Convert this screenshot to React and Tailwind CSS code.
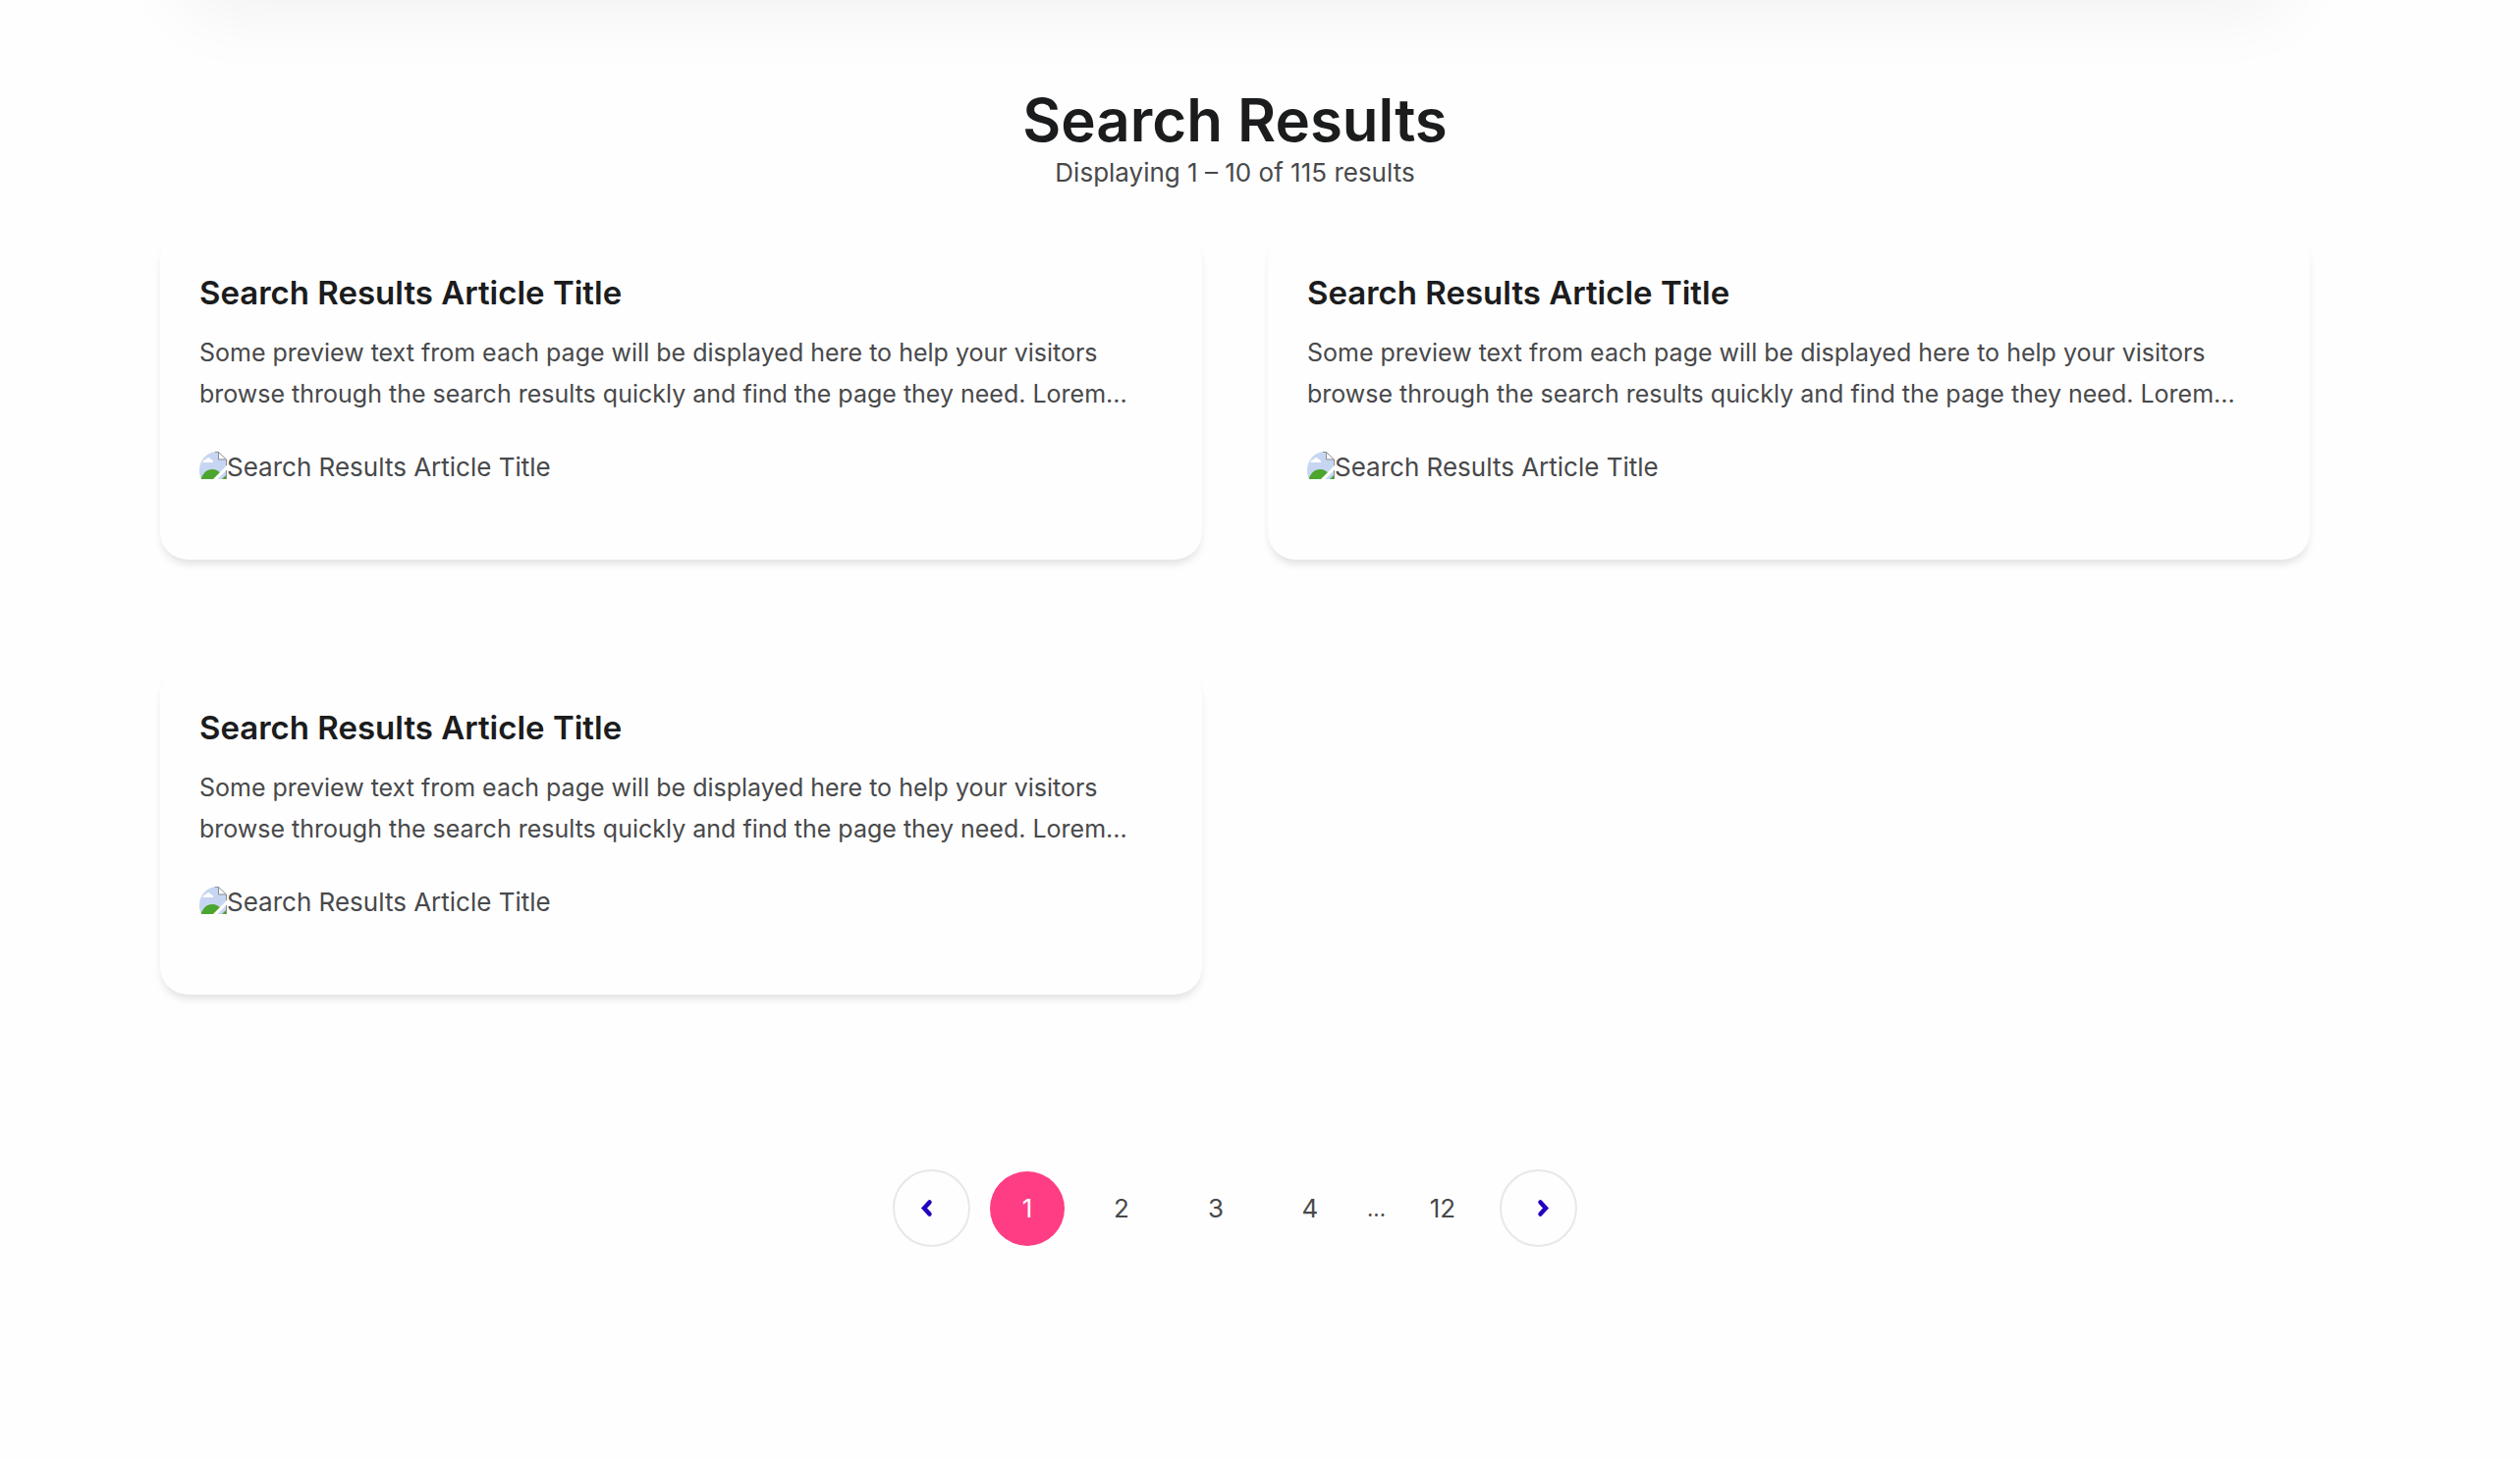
import React from 'react';

const results = [1, 2, 3].map((id) => ({
  id,
  title: 'Search Results Article Title',
  preview:
    'Some preview text from each page will be displayed here to help your visitors browse through the search results quickly and find the page they need. Lorem...',
}));

function ImagePlaceholder() {
  return (
    <svg className="mb-1 h-7 w-7 shrink-0" viewBox="0 0 28 28" aria-hidden="true">
      <defs>
        <clipPath id="thumb">
          <path d="M2 28C.5 25 0 22 0 19C0 8 8 0 18.500 0L28 8.500V28Z" />
        </clipPath>
      </defs>
      <g clipPath="url(#thumb)">
        <rect width="28" height="28" fill="#c6d6f2" />
        <path d="M3.500 11c0-2 1.500-3 3-2.800.8-2.600 4.500-2.800 5.200-.2 1.800 0 2.600 1.400 2.300 3z" fill="#fff" />
        <path d="M1.500 28c2-6 6-10 11.500-10 4 0 7 2 8.500 4l-6 6z" fill="#4ca52e" />
        <path d="M23 28l4-4v4z" fill="#4ca52e" />
        <path d="M28 14v4.500L18.500 28H14z" fill="#fefefe" />
        <path d="M19 0l9 8.500V0z" fill="#fefefe" />
      </g>
      <path d="M19.500 .8v6.700h7.500z" fill="#fff" />
      <path d="M16 .5h3.500l8 7.500M19.500 .5v7.500h8v6" fill="none" stroke="#8d8f94" strokeWidth="1" />
      <path d="M27.500 19v9" stroke="#8d8f94" strokeWidth="1" />
    </svg>
  );
}

function ResultCard({ title, preview }) {
  return (
    <article className="rounded-[28px] bg-[#fefefe] px-10 pt-[38px] pb-[72px] shadow-[0_6px_9px_-2px_rgba(0,0,0,0.12)]">
      <h2 className="text-[33px] leading-[44px] font-semibold text-[#1b1c1d]">
        <a href="#article">{title}</a>
      </h2>
      <p className="mt-[18px] text-[25px] leading-[42px]">{preview}</p>
      <div className="mt-8 flex items-center text-[26px] leading-[44px]">
        <ImagePlaceholder />
        <span>{title}</span>
      </div>
    </article>
  );
}

function ArrowLink({ label, path }) {
  return (
    <a
      href="#results"
      aria-label={label}
      className="flex size-[79px] items-center justify-center rounded-full border-2 border-[#e6e8e9]"
    >
      <svg className="h-6 w-8" viewBox="0 0 32 24" fill="none" aria-hidden="true">
        <path d={path} stroke="#2500c0" strokeWidth="4.500" strokeLinecap="round" />
      </svg>
    </a>
  );
}

function PageLink({ page, current }) {
  return (
    <a
      href="#results"
      aria-current={current ? 'page' : undefined}
      className={
        current
          ? 'flex size-[76px] items-center justify-center rounded-full bg-[#ff3d85] text-white'
          : 'flex size-[76px] items-center justify-center rounded-full'
      }
    >
      {page}
    </a>
  );
}

export default function App() {
  return (
    <div className="min-h-screen overflow-hidden bg-[#fefefe] pr-[214px] pl-[163px] font-['Inter',sans-serif] text-[#48494b]">
      <div className="-mt-64 h-64 rounded-[40px] bg-white shadow-[0_36px_80px_-28px_rgba(0,0,0,0.06)]" />
      <header className="pt-[86px] text-center">
        <h1 className="text-[60px] leading-[72px] font-semibold text-[#1b1c1d]">Search Results</h1>
        <p className="text-[26px] leading-[36px]">Displaying 1 – 10 of 115 results</p>
      </header>
      <main id="results" className="mt-11 grid grid-cols-2 gap-x-[67px] gap-y-[111px]">
        {results.map((result) => (
          <ResultCard key={result.id} {...result} />
        ))}
      </main>
      <nav
        aria-label="Pagination"
        className="mt-[178px] flex items-center justify-center gap-5 text-[26px] leading-[36px]"
      >
        <ArrowLink label="Previous page" path="M13.500 5.500L8 11.500l5.500 6" />
        <PageLink page={1} current />
        <PageLink page={2} />
        <PageLink page={3} />
        <PageLink page={4} />
        <span className="w-[19px] text-center text-[22px]">...</span>
        <PageLink page={12} />
        <ArrowLink label="Next page" path="M17.500 5.500L23 11.500l-5.500 6" />
      </nav>
    </div>
  );
}
